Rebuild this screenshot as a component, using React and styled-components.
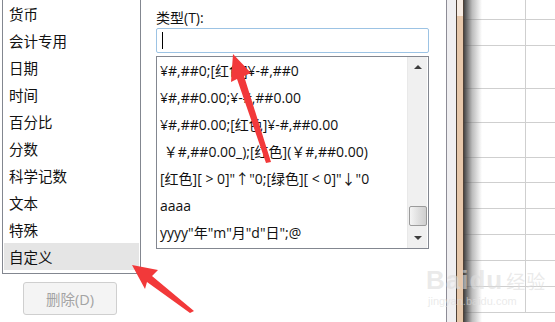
import React from 'react';
import styled, { createGlobalStyle } from 'styled-components';

const GlobalStyle = createGlobalStyle`
  html, body {
    margin: 0;
    padding: 0;
    background: #ffffff;
  }
  body {
    width: 555px;
    height: 322px;
    overflow: hidden;
    font-family: "Open Sans", "Noto Sans CJK SC", sans-serif;
    color: #111111;
  }
`;

const categories = ['货币', '会计专用', '日期', '时间', '百分比', '分数', '科学记数', '文本', '特殊', '自定义'];

const formats = [
  '¥#,##0;[红色]¥-#,##0',
  '¥#,##0.00;¥-#,##0.00',
  '¥#,##0.00;[红色]¥-#,##0.00',
  ' ￥#,##0.00_);[红色](￥#,##0.00)',
  '[红色][ > 0]"↑"0;[绿色][ < 0]"↓"0',
  'aaaa',
  'yyyy"年"m"月"d"日";@',
];

const sheetRows = [20, 26, 43, 34, 35, 25, 26, 26, 26, 26, 26];

const Page = styled.div`
  position: relative;
  display: flex;
  width: 555px;
  height: 322px;
  overflow: hidden;
`;

const Dialog = styled.div`
  display: flex;
  width: 446px;
  height: 322px;
  background: #ffffff;
  border-right: 1px solid #8d8c96;
`;

const LeftColumn = styled.div`
  display: flex;
  flex-direction: column;
  padding-left: 2px;
`;

const CategoryList = styled.ul`
  list-style: none;
  margin: 0;
  width: 135px;
  height: 270px;
  padding: 0 1px 3px;
  border: 1px solid #838790;
  border-top: none;
`;

const CategoryItem = styled.li`
  height: 27px;
  line-height: 27px;
  padding-left: 5px;
  font-family: "Noto Sans CJK SC", sans-serif;
  font-size: 14.5px;
  background: ${(p) => (p.selected ? '#e5e5e5' : 'transparent')};
`;

const DeleteButton = styled.button`
  margin: 8px 0 0 21px;
  width: 94px;
  height: 33px;
  border: 1px solid #cfcfcf;
  border-radius: 3px;
  background: #f4f4f4;
  color: #a3a3a3;
  font-family: inherit;
  font-size: 14.5px;
  padding: 0;
`;

const RightColumn = styled.div`
  display: flex;
  flex-direction: column;
  margin-left: 15px;
  width: 273px;
`;

const TypeLabel = styled.label`
  display: block;
  height: 20px;
  line-height: 20px;
  margin-top: 8px;
  font-size: 14px;
`;

const TypeInput = styled.div`
  position: relative;
  height: 23px;
  border: 1px solid #9cc3e4;
  border-radius: 2px;
`;

const Caret = styled.span`
  position: absolute;
  left: 5px;
  top: 3px;
  width: 1px;
  height: 17px;
  background: #000000;
`;

const FormatBox = styled.div`
  display: flex;
  margin-top: 3px;
  height: 191px;
  border: 1px solid #838790;
`;

const FormatList = styled.ul`
  flex: 1;
  list-style: none;
  margin: 0;
  padding: 0 0 0 3px;
  overflow: hidden;
`;

const FormatItem = styled.li`
  height: 27px;
  line-height: 27px;
  font-size: 14px;
  white-space: pre;
`;

const ScrollBar = styled.div`
  display: flex;
  flex-direction: column;
  width: 19px;
  margin-right: 1px;
  background: #f0f0f0;
  border-left: 1px solid #e9e9e9;
`;

const ScrollButton = styled.div`
  display: flex;
  align-items: center;
  justify-content: center;
  height: 20px;
  &::after {
    content: '';
    border-left: 4px solid transparent;
    border-right: 4px solid transparent;
    ${(p) => (p.down ? 'border-top: 4px solid #3c3c3c;' : 'border-bottom: 4px solid #3c3c3c;')}
  }
`;

const ScrollTrack = styled.div`
  flex: 1;
  display: flex;
  flex-direction: column;
  justify-content: flex-end;
  align-items: center;
  padding-bottom: 2px;
`;

const ScrollThumb = styled.div`
  width: 16px;
  height: 18px;
  border: 1px solid #9b9b9b;
  border-radius: 2px;
  background: linear-gradient(to right, #f4f4f4, #dcdcdc 60%, #cfcfcf);
`;

const Gutter = styled.div`
  width: 9px;
  background: #f0eff1;
`;

const SplitBar = styled.div`
  width: 6px;
  border-left: 1px solid #4f4238;
  border-right: 1px solid #4f4238;
  background: linear-gradient(to bottom, #f7ece3 0, #f7ece3 16px, #e7c8ab 16px);
`;

const Sheet = styled.div`
  position: relative;
  flex: 1;
  background: #ffffff;
  &::before {
    content: '';
    position: absolute;
    left: 0;
    top: 0;
    bottom: 0;
    width: 18px;
    background: linear-gradient(to right, rgba(60, 60, 60, 0.95), rgba(120, 120, 120, 0.5) 45%, rgba(255, 255, 255, 0));
  }
`;

const SheetRow = styled.div`
  display: flex;
  box-sizing: border-box;
  border-bottom: 1px solid #cfcfcf;
`;

const SheetCell = styled.div`
  width: ${(p) => (p.wide ? 'auto' : '61px')};
  flex: ${(p) => (p.wide ? 1 : 'none')};
  border-right: ${(p) => (p.wide ? 'none' : '1px solid #cfcfcf')};
`;

const Arrows = styled.svg`
  position: absolute;
  left: 0;
  top: 0;
  pointer-events: none;
`;

const Watermark = styled.div`
  position: absolute;
  left: 426px;
  top: 266px;
  display: flex;
  flex-direction: column;
  color: rgba(220, 220, 220, 0.6);
  font-family: "Liberation Sans", Arial, sans-serif;
  pointer-events: none;
`;

const WatermarkLogo = styled.div`
  display: flex;
  align-items: baseline;
  gap: 3px;
  font-size: 26px;
  font-weight: bold;
  letter-spacing: 1px;
  line-height: 28px;
`;

const WatermarkTag = styled.span`
  font-family: "Noto Sans CJK SC", sans-serif;
  font-size: 19px;
  font-weight: normal;
`;

const WatermarkUrl = styled.span`
  font-size: 11px;
  line-height: 12px;
  padding-left: 2px;
`;

export default function App() {
  return (
    <>
      <GlobalStyle />
      <Page>
        <Dialog>
          <LeftColumn>
            <CategoryList>
              {categories.map((name, i) => (
                <CategoryItem key={name} selected={i === categories.length - 1}>
                  {name}
                </CategoryItem>
              ))}
            </CategoryList>
            <DeleteButton>删除(D)</DeleteButton>
          </LeftColumn>
          <RightColumn>
            <TypeLabel>类型(T):</TypeLabel>
            <TypeInput>
              <Caret />
            </TypeInput>
            <FormatBox>
              <FormatList>
                {formats.map((f) => (
                  <FormatItem key={f}>{f}</FormatItem>
                ))}
              </FormatList>
              <ScrollBar>
                <ScrollButton />
                <ScrollTrack>
                  <ScrollThumb />
                </ScrollTrack>
                <ScrollButton down />
              </ScrollBar>
            </FormatBox>
          </RightColumn>
        </Dialog>
        <Gutter />
        <SplitBar />
        <Sheet>
          {sheetRows.map((h, i) => (
            <SheetRow key={i} style={{ height: h }}>
              <SheetCell />
              <SheetCell wide />
            </SheetRow>
          ))}
        </Sheet>

        <Arrows width="555" height="322" viewBox="0 0 555 322">
          <polygon
            fill="#f2393a"
            points="233,54 251,73 244,76 271,162 266,163 237,79 231,82"
          />
          <polygon
            fill="#f2393a"
            points="132,265 158,270 152,276 194,311 190,313 147,282 145,289"
          />
        </Arrows>

        <Watermark>
          <WatermarkLogo>
            <span>Baidu</span>
            <WatermarkTag>经验</WatermarkTag>
          </WatermarkLogo>
          <WatermarkUrl>jingyan.baidu.com</WatermarkUrl>
        </Watermark>
      </Page>
    </>
  );
}
